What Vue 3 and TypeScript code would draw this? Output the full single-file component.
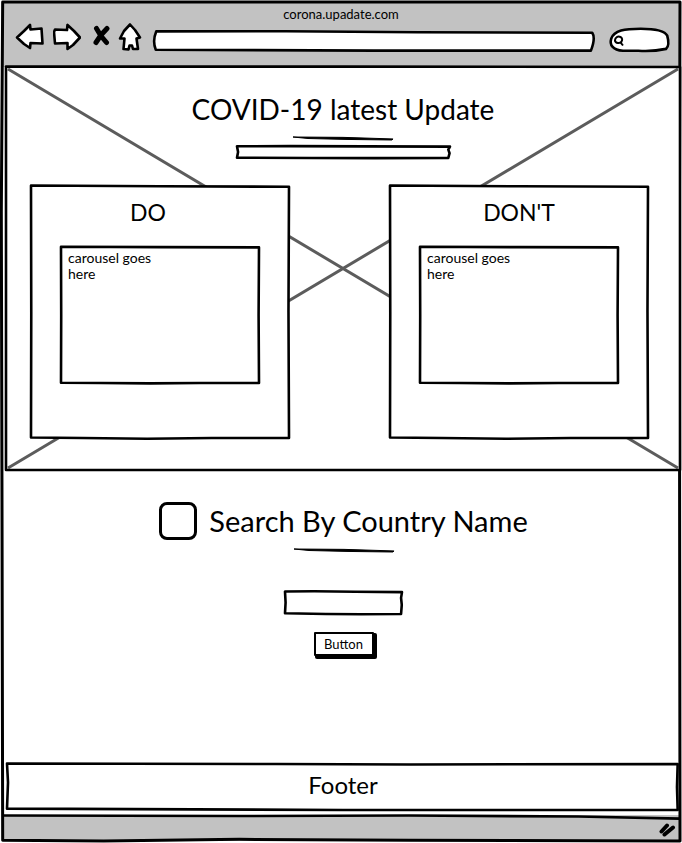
<script setup lang="ts">
import { h, ref } from 'vue'

// Hand-drawn outline that stretches with the box it is placed in.
const Sketch = (props: { d: string }) =>
  h('svg', { class: 'sketch', viewBox: '0 0 100 100', preserveAspectRatio: 'none', 'aria-hidden': 'true' }, [
    h('path', { d: props.d, 'vector-effect': 'non-scaling-stroke' }),
  ])
Sketch.props = ['d']

interface Card {
  title: string
  body: string
  modifier: string
}

const cards: Card[] = [
  { title: 'DO', body: 'carousel goes\nhere', modifier: 'card-do' },
  { title: "DON'T", body: 'carousel goes\nhere', modifier: 'card-dont' },
]

const address = ref('')
const query = ref('')
const country = ref('')
const checked = ref(false)

const frame = 'M0.1 0 L100 0 L99.9 30 L100 100 L60 99.9 L35 99.8 L15 100 L0.1 99.9 L0 60 L-0.1 25 Z'
const panel = 'M0 -0.2 L50 0.1 L100 0.3 L99.8 50 L100 100 L70 100 L45 100.3 L20 100 L0 99.8 L0.1 50 Z'
const strip = 'M0 2 L25 1 L60 3 L100 5 L99.2 30 L99.8 60 L99.2 100 L65 101 L35 100 L0 97 L0.5 50 Z'
const stroke = 'M0 0 L50 12 L100 65 L99 100 L55 82 L15 50 Z'
</script>

<template>
  <div class="page">
    <div class="browser">
      <Sketch :d="frame" />
      <header class="chrome">
        <p class="site">corona.upadate.com</p>
        <div class="toolbar">
          <button class="tool" type="button" aria-label="Back">
            <svg width="30" height="30" viewBox="15 22 30 30">
              <path d="M17 37.5 L24 31 L30 25 L30.5 29.5 L41.5 28.5 L42 36 L42.5 43.5 L30.500 43 L30 48 L24 44 Z" />
            </svg>
          </button>
          <button class="tool" type="button" aria-label="Forward">
            <svg width="28" height="30" viewBox="53 22 28 30">
              <path d="M80 37.5 L74 31 L67.500 25 L67 30 L55 29.500 L54 32 L55 43.500 L67.500 43 L67.500 49 L73 45 Z" />
            </svg>
          </button>
          <button class="tool" type="button" aria-label="Stop">
            <svg width="21" height="30" viewBox="89 22 21 30">
              <path class="cross" d="M96.500 28.500 L101 36 L106.500 42.500 M107 28.500 L101 35 L96 42.500" />
            </svg>
          </button>
          <button class="tool" type="button" aria-label="Home">
            <svg width="24" height="30" viewBox="118 22 24 30">
              <path d="M130 24.500 L135 30 L140 37.500 L136.500 38.500 L138 49 L133 49 L132 45.500 L129.500 45.500 L128.500 49.500 L123.500 49 L124.500 38.500 L120 38.500 L124 31 Z" />
            </svg>
          </button>
          <div class="address">
            <Sketch d="M0.5 2 L30 1 L60 6 L99.600 9 Q100.400 35 99.300 98 L50 98 L0.4 94 Q-0.400 50 0.5 2 Z" />
            <input v-model="address" class="field" type="text" aria-label="Address" />
          </div>
          <div class="search">
            <Sketch d="M2 45 C7 10 25 3 52 3 C80 3 93 12 97 32 C99 50 101 75 95 87 C80 95 65 98 48 95 L22 95 C4 93 -1 68 2 45 Z" />
            <svg class="lens" width="12" height="12" viewBox="0 0 12 12" aria-hidden="true">
              <path d="M8.500 6.500 C7 9 2.500 8.500 2 5.500 C2 2 5 1 7.500 2 C9.500 3 9.500 5 8.500 6.500 L8 8 L10 10.500 M1 5.500 L2 5.500" />
            </svg>
            <input v-model="query" class="field" type="search" aria-label="Search" />
          </div>
        </div>
      </header>

      <main class="content">
        <section class="hero">
          <svg class="sketch cross-lines" viewBox="0 0 100 100" preserveAspectRatio="none" aria-hidden="true">
            <path d="M0.3 0.5 L99.7 99.5 M99.7 0.5 L0.3 99.5" vector-effect="non-scaling-stroke" />
          </svg>
          <Sketch d="M0 -0.1 L50 -0.1 L100 0 L100 100 L0 100 Z" />
          <h1 class="title">COVID-19 latest Update</h1>
          <div class="rule"><Sketch :d="stroke" /></div>
          <div class="bar"><Sketch :d="strip" /></div>
          <div class="cards">
            <article v-for="card in cards" :key="card.title" class="card" :class="card.modifier">
              <Sketch :d="panel" />
              <h2 class="card-title">{{ card.title }}</h2>
              <div class="carousel">
                <Sketch :d="panel" />
                <p class="carousel-text">{{ card.body }}</p>
              </div>
            </article>
          </div>
        </section>

        <section class="lookup">
          <div class="lookup-head">
            <input id="by-country" v-model="checked" class="tick" type="checkbox" />
            <label class="lookup-title" for="by-country">Search By Country Name</label>
          </div>
          <div class="rule"><Sketch :d="stroke" /></div>
          <div class="country">
            <Sketch :d="strip" />
            <input v-model="country" class="field" type="text" aria-label="Country" />
          </div>
          <button class="submit" type="button">Button</button>
        </section>
      </main>

      <footer class="footer">
        <Sketch d="M0 -1 L40 0 L60 1 L99.800 0 L99.700 50 L99.800 100 L50 100 L0 97 L0.15 40 Z" />
        Footer
      </footer>
      <div class="status">
        <Sketch d="M0 2 L35 4 L60 2 L85 6 L100 14" />
        <svg class="grip" width="18" height="16" viewBox="0 0 18 16" aria-hidden="true">
          <path d="M2.500 9.500 L8 3.500 M5.500 12.500 L14 5.500" />
        </svg>
      </div>
    </div>
  </div>
</template>

<style>
body {
  margin: 0;
  background: #fff;
}
</style>

<style scoped>
.page,
.page * {
  box-sizing: border-box;
}

.page {
  display: flex;
  min-height: 100vh;
  padding: 2px;
  color: #000;
  font-family: Lato, "Liberation Sans", sans-serif;
}

.browser {
  position: relative;
  display: flex;
  flex: 1;
  flex-direction: column;
  min-width: 0;
}

.sketch {
  position: absolute;
  inset: 0;
  width: 100%;
  height: 100%;
  overflow: visible;
  fill: none;
  stroke: #000;
  stroke-width: 2.6px;
  stroke-linejoin: round;
  pointer-events: none;
}

.browser > .sketch {
  z-index: 1;
  stroke-width: 3px;
}

.chrome {
  height: 65px;
  background: #c2c2c2;
}

.site {
  margin: 0;
  padding-top: 4px;
  font-size: 13px;
  line-height: 16px;
  text-align: center;
}

.toolbar {
  display: flex;
  gap: 8px;
  align-items: center;
  padding: 0 11px 0 13px;
}

.tool {
  display: flex;
  padding: 0;
  border: 0;
  background: none;
}

.tool path {
  fill: #fff;
  stroke: #000;
  stroke-width: 2.6px;
  stroke-linejoin: round;
}

.tool .cross {
  fill: none;
  stroke-width: 5px;
  stroke-linecap: round;
}

.address {
  position: relative;
  flex: 1;
  height: 20px;
  margin: 8px 8px 0 4px;
}

.search {
  position: relative;
  width: 59px;
  height: 24px;
  margin-top: 6px;
}

.address .sketch,
.search .sketch,
.bar .sketch,
.card .sketch,
.country .sketch,
.footer .sketch {
  fill: #fff;
}

.lens {
  position: absolute;
  top: 7px;
  left: 3px;
  fill: none;
  stroke: #000;
  stroke-width: 2px;
}

.field {
  position: relative;
  display: block;
  width: 100%;
  height: 100%;
  padding: 0 8px;
  border: 0;
  background: transparent;
  font: inherit;
  font-size: 13px;
  outline: 0;
}

.search .field {
  padding-left: 16px;
  appearance: none;
}

.content {
  display: flex;
  flex: 1;
  flex-direction: column;
}

.hero {
  position: relative;
  z-index: 2;
  display: flex;
  flex-direction: column;
  align-items: center;
  margin-left: 4px;
  padding: 24px 0 32px;
  background: #fff;
}

.cross-lines {
  stroke: #5c5c5c;
  stroke-width: 3px;
}

.title,
.lookup-title {
  margin: 0;
  font-size: 28px;
  font-weight: 400;
  line-height: 36px;
}

.lookup-title {
  font-size: 29px;
}

.rule {
  position: relative;
  width: 100px;
  height: 3px;
}

.rule .sketch {
  fill: #000;
  stroke: #000;
  stroke-width: 1px;
}

.hero .rule {
  margin-top: 10px;
}

.bar {
  position: relative;
  width: 213px;
  height: 12px;
  margin-top: 6px;
}

.cards {
  position: relative;
  display: grid;
  grid-template-columns: 1fr 1fr;
  gap: 101px;
  width: 100%;
  margin-top: 28px;
  padding: 0 32px 0 25px;
}

.card {
  position: relative;
  padding: 12px 30px 55px;
}

.card-title {
  position: relative;
  margin: 0 0 21px;
  font-size: 23px;
  font-weight: 400;
  line-height: 28px;
  text-align: center;
}

.card-do .card-title {
  padding-right: 24px;
}

.carousel {
  position: relative;
  height: 136px;
  padding: 3px 7px;
}

.carousel-text {
  position: relative;
  margin: 0;
  font-size: 14px;
  line-height: 16px;
  white-space: pre-line;
}

.lookup {
  display: flex;
  flex-direction: column;
  align-items: center;
  padding: 32px 0 32px 5px;
  background: #fff;
}

.lookup-head {
  display: flex;
  gap: 12px;
  align-items: center;
}

.tick {
  width: 38px;
  height: 38px;
  margin: 0;
  border: 3px solid #000;
  border-radius: 8px;
  background: #fff;
  appearance: none;
}

.tick:checked {
  background: #000;
}

.lookup .rule {
  margin-top: 9px;
}

.country {
  position: relative;
  width: 117px;
  height: 23px;
  margin-top: 39px;
}

.submit {
  width: 60px;
  height: 24px;
  margin-top: 18px;
  padding: 0;
  border: 2px solid #000;
  border-radius: 1px;
  background: #fff;
  box-shadow: 2px 2px 0 1px #000;
  color: #000;
  font: inherit;
  font-size: 13px;
  line-height: 16px;
}

.footer {
  position: relative;
  height: 46px;
  margin: 0 1px 5px 5px;
  font-size: 24px;
  line-height: 41px;
  text-align: center;
  isolation: isolate;
}

.footer .sketch {
  z-index: -1;
}

.status {
  position: relative;
  display: flex;
  justify-content: flex-end;
  height: 26px;
  padding: 7px 3px 0;
  background: #c2c2c2;
}

.grip {
  fill: none;
  stroke: #000;
  stroke-width: 4px;
  stroke-linecap: round;
}
</style>
